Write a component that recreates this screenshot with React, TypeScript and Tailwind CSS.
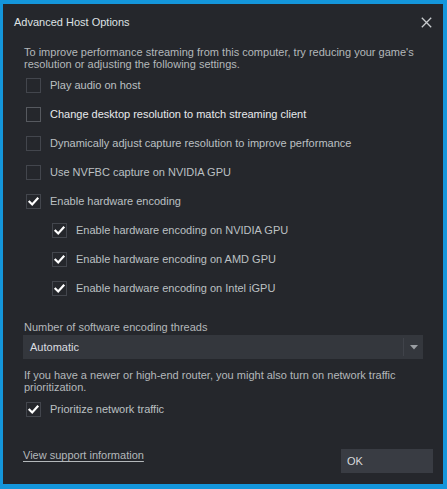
import React from "react";

function Box({ checked, bright }: { checked?: boolean; bright?: boolean }) {
  return (
    <div
      className={
        "w-[15px] h-[15px] shrink-0 border flex items-center justify-center " +
        (bright ? "border-[#56595f]" : "border-[#43464d]")
      }
    >
      {checked && (
        <svg width="13" height="13" viewBox="0 0 13 13">
          <path d="M2.5 6.8 L5.2 9.5 L10.5 3.5" fill="none" stroke="#ffffff" strokeWidth="2.2" strokeLinecap="square" />
        </svg>
      )}
    </div>
  );
}

function Row({
  label,
  checked,
  bright,
  indent,
}: {
  label: string;
  checked?: boolean;
  bright?: boolean;
  indent?: boolean;
}) {
  return (
    <div className={"h-[29px] flex items-center " + (indent ? "pl-[49px]" : "pl-[23px]")}>
      <Box checked={checked} bright={bright} />
      <span className={"ml-[9px] text-[11px] " + (bright ? "text-[#e8eaec]" : "text-[#bcc0c3]")}>{label}</span>
    </div>
  );
}

export default function App() {
  return (
    <div
      className="w-[447px] h-[489px] bg-[#1496db] pt-[4px] pl-[3px]"
      style={{ fontFamily: '"Liberation Sans", Arial, sans-serif' }}
    >
      <div className="w-[440px] h-[480px] bg-[#25272c] flex flex-col">
        <div className="h-[36px] flex items-center justify-between pl-[11px] pr-[11px]">
          <span className="text-[11px] text-[#dfe2e4]">Advanced Host Options</span>
          <svg width="11" height="11" viewBox="0 0 11 11">
            <path d="M0.8 0.8 L10.2 10.2 M10.2 0.8 L0.8 10.2" stroke="#c8cbce" strokeWidth="1.3" />
          </svg>
        </div>
        <div className="mt-[7px] pl-[21px] pr-[20px] text-[11px] leading-[11.5px] text-[#b4b8bb]">
          To improve performance streaming from this computer, try reducing your game's resolution or adjusting the following settings.
        </div>
        <div className="mt-[1px] flex flex-col">
          <Row label="Play audio on host" />
          <Row label="Change desktop resolution to match streaming client" bright />
          <Row label="Dynamically adjust capture resolution to improve performance" />
          <Row label="Use NVFBC capture on NVIDIA GPU" />
          <Row label="Enable hardware encoding" checked />
          <Row label="Enable hardware encoding on NVIDIA GPU" checked indent />
          <Row label="Enable hardware encoding on AMD GPU" checked indent />
          <Row label="Enable hardware encoding on Intel iGPU" checked indent />
        </div>
        <div className="mt-[17px] pl-[21px] text-[11px] leading-[14px] text-[#b4b8bb]">
          Number of software encoding threads
        </div>
        <div className="mt-[1px] ml-[20px] w-[400px] h-[24px] bg-[#34373d] flex items-center">
          <span className="flex-1 pl-[7px] text-[11px] text-[#dcdee0]">Automatic</span>
          <div className="w-[1px] h-[18px] bg-[#40434a]" />
          <div className="w-[19px] flex items-center justify-center">
            <svg width="8" height="5" viewBox="0 0 8 5">
              <path d="M0 0 L8 0 L4 4.5 Z" fill="#9a9ea3" />
            </svg>
          </div>
        </div>
        <div className="mt-[11px] pl-[21px] pr-[20px] text-[11px] leading-[11.5px] text-[#b4b8bb]">
          If you have a newer or high-end router, you might also turn on network traffic prioritization.
        </div>
        <div className="mt-[2px]">
          <Row label="Prioritize network traffic" checked />
        </div>
        <div className="flex-1 flex items-end justify-between pl-[20px] pr-[10px] pb-[11px]">
          <span className="mb-[11px] text-[11px] leading-[14px] text-[#b4b8bb] underline underline-offset-2">
            View support information
          </span>
          <div className="w-[92px] h-[24px] bg-[#393c43] flex items-center pl-[6px] text-[11px] text-[#d8dadc]">
            OK
          </div>
        </div>
      </div>
    </div>
  );
}
